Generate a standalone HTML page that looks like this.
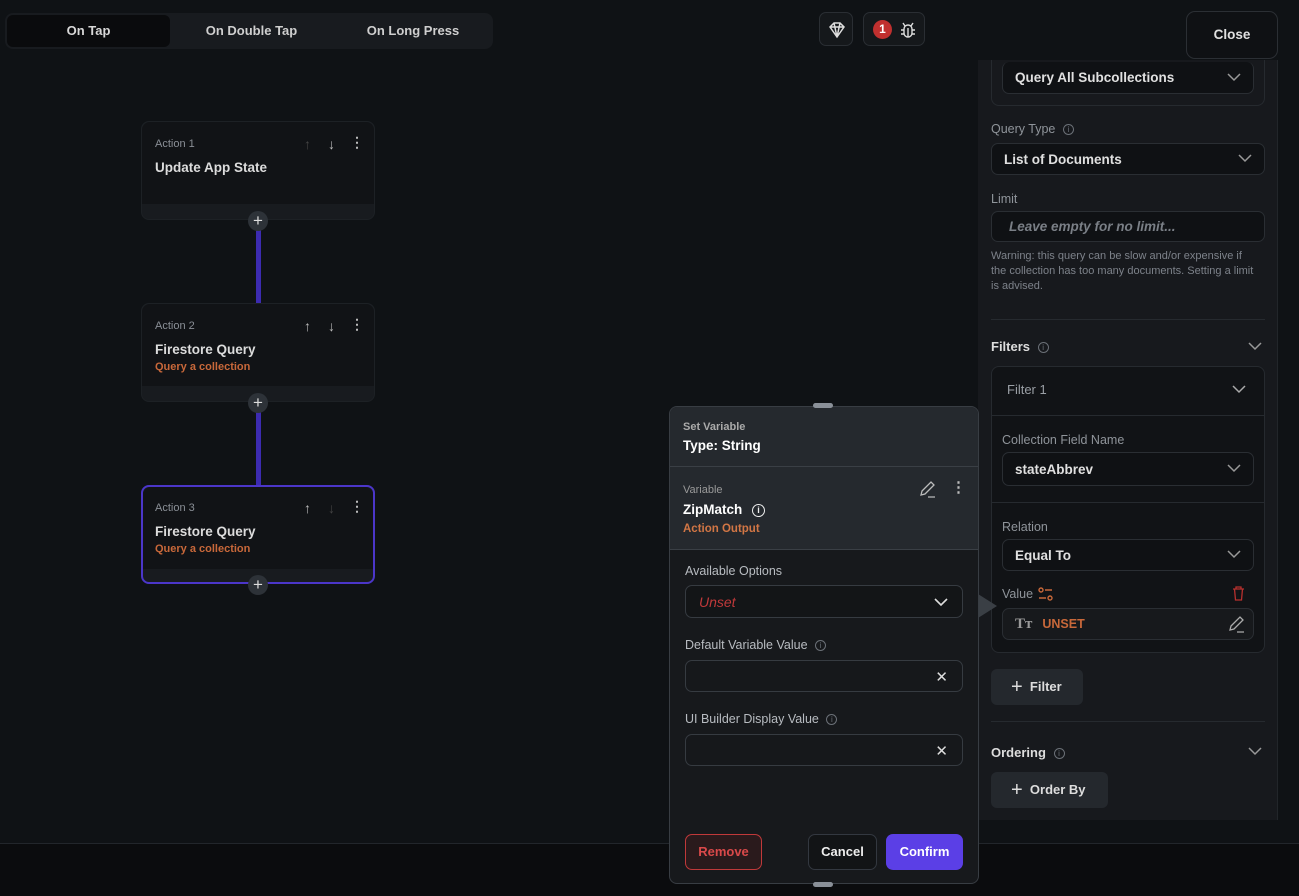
<!DOCTYPE html><html><head><meta charset="utf-8"><style>
*{box-sizing:border-box;margin:0;padding:0}
body{width:1299px;height:896px;background:#0f1215;font-family:"Liberation Sans",sans-serif;color:#e6e6e6;position:relative;overflow:hidden}
.a{position:absolute}
.b{font-weight:bold}
.card{position:absolute;left:141px;width:234px;background:#181b1f;border:1px solid #1d2125;border-radius:8px}
.card .in{position:absolute;left:0;top:0;right:0;height:82px;background:#111316;border-radius:8px 8px 0 0}
.lbl{font-size:11px;color:#8a8f96}
.ttl{font-size:13.5px;font-weight:bold;color:#dcdcdc}
.org{font-size:11px;font-weight:bold;color:#c8683a}
.plus{position:absolute;width:20px;height:20px;border-radius:50%;background:#2d3238;color:#ddd;font-size:17px;line-height:19px;text-align:center;left:248px}
.line{position:absolute;left:256px;width:5px;background:#3c2bb0}
.sel{position:absolute;border:1px solid #2a2e33;background:#0f1114;border-radius:7px;font-size:13.5px;font-weight:bold;color:#e0e0e0;padding-left:12px;display:flex;align-items:center}
.chev{position:absolute;right:12px;top:50%;margin-top:-5px}
.rl{position:absolute;font-size:12.5px;color:#8f949a}
.inp{position:absolute;left:685px;width:278px;height:32px;border:1px solid #363b41;border-radius:7px;background:#16181b}
.x{position:absolute;right:14px;top:7px;color:#ddd;font-size:15px}
.ic{display:inline-block;width:11px;height:11px;border:1px solid #6b7077;border-radius:50%;font-size:8px;line-height:9px;text-align:center;color:#6b7077;vertical-align:middle;margin-left:4px}
</style></head><body>
<div class="a" style="left:5px;top:13px;width:488px;height:36px;background:#181b1f;border-radius:8px"></div>
<div class="a b" style="left:7px;top:15px;width:163px;height:32px;background:#0a0b0d;border-radius:6px;font-size:13px;color:#d8d8d8;text-align:center;line-height:32px">On Tap</div>
<div class="a b" style="left:170px;top:15px;width:163px;height:32px;font-size:13px;color:#cfcfcf;text-align:center;line-height:32px">On Double Tap</div>
<div class="a b" style="left:333px;top:15px;width:160px;height:32px;font-size:13px;color:#cfcfcf;text-align:center;line-height:32px">On Long Press</div>
<div class="a" style="left:819px;top:12px;width:34px;height:34px;border:1px solid #2a2e33;border-radius:7px;background:#15181b">
<svg class="a" style="left:8px;top:8px" width="18" height="18" viewBox="0 0 18 18" fill="none" stroke="#ddd" stroke-width="1.5"><path d="M2 6l4-4h6l4 4-7 10z M6 2l3 14 M12 2 9 16 M2 6h14"/></svg></div>
<div class="a" style="left:863px;top:12px;width:62px;height:34px;border:1px solid #2a2e33;border-radius:7px;background:#15181b">
<div class="a b" style="left:9px;top:7px;width:19px;height:19px;border-radius:50%;background:#c0302f;color:#fff;font-size:12px;text-align:center;line-height:19px">1</div>
<svg class="a" style="left:34px;top:7px" width="20" height="20" viewBox="0 0 20 20" fill="none" stroke="#ddd" stroke-width="1.4"><rect x="6" y="5" width="8" height="12" rx="4"/><path d="M10 8v9M6 10H3M14 10h3M6 14H3M14 14h3M7 6 5 3M13 6l2-3"/></svg></div>
<div class="a b" style="left:1186px;top:11px;width:92px;height:48px;border:1px solid #2b2f34;border-radius:9px;background:#0f1114;font-size:13.5px;color:#e0e0e0;text-align:center;line-height:46px">Close</div>

<div class="line" style="top:228px;height:76px"></div>
<div class="line" style="top:410px;height:76px"></div>
<div class="card" style="top:121px;height:99px"><div class="in"></div>
<div class="a lbl" style="left:13px;top:16px">Action 1</div>
<div class="a ttl" style="left:13px;top:38px">Update App State</div>
<div class="a" style="left:162px;top:14px;font-size:14px;color:#444">↑</div>
<div class="a" style="left:186px;top:14px;font-size:14px;color:#bbb">↓</div>
<div class="a b" style="left:208px;top:12px;font-size:14px;color:#bbb">⋮</div></div>
<div class="plus" style="top:211px">+</div>
<div class="card" style="top:303px;height:99px"><div class="in"></div>
<div class="a lbl" style="left:13px;top:16px">Action 2</div>
<div class="a ttl" style="left:13px;top:38px">Firestore Query</div>
<div class="a org" style="left:13px;top:57px">Query a collection</div>
<div class="a" style="left:162px;top:14px;font-size:14px;color:#bbb">↑</div>
<div class="a" style="left:186px;top:14px;font-size:14px;color:#bbb">↓</div>
<div class="a b" style="left:208px;top:12px;font-size:14px;color:#bbb">⋮</div></div>
<div class="plus" style="top:393px">+</div>
<div class="card" style="top:485px;height:99px;border:2px solid #4b36c9"><div class="in"></div>
<div class="a lbl" style="left:12px;top:15px">Action 3</div>
<div class="a ttl" style="left:12px;top:37px">Firestore Query</div>
<div class="a org" style="left:12px;top:56px">Query a collection</div>
<div class="a" style="left:161px;top:13px;font-size:14px;color:#bbb">↑</div>
<div class="a" style="left:185px;top:13px;font-size:14px;color:#444">↓</div>
<div class="a b" style="left:207px;top:11px;font-size:14px;color:#bbb">⋮</div></div>
<div class="plus" style="top:575px">+</div>

<div class="a" style="left:0;top:843px;width:1299px;height:53px;background:#0b0c0e;border-top:1px solid #22262b"></div>

<div class="a" style="left:978px;top:60px;width:300px;height:760px;background:#17191d;border-right:1px solid #22262a"></div>
<div class="a" style="left:991px;top:60px;width:274px;height:46px;border:1px solid #262a2f;border-top:none;border-radius:0 0 8px 8px"></div>
<div class="sel" style="left:1002px;top:62px;width:252px;height:32px;border-top:none">Query All Subcollections<svg class="chev" width="14" height="9" viewBox="0 0 14 9" fill="none" stroke="#999" stroke-width="1.5"><path d="M1 1l6 6 6-6"/></svg></div>
<div class="rl" style="left:991px;top:122px">Query Type <span class="ic">i</span></div>
<div class="sel" style="left:991px;top:143px;width:274px;height:32px">List of Documents<svg class="chev" width="14" height="9" viewBox="0 0 14 9" fill="none" stroke="#999" stroke-width="1.5"><path d="M1 1l6 6 6-6"/></svg></div>
<div class="rl" style="left:991px;top:192px">Limit</div>
<div class="sel" style="left:991px;top:211px;width:274px;height:31px;padding-left:17px;color:#7a7f86;font-style:italic">Leave empty for no limit...</div>
<div class="a" style="left:991px;top:249px;width:266px;font-size:11px;line-height:15px;color:#7d828a">Warning: this query can be slow and/or expensive if the collection has too many documents. Setting a limit is advised.</div>
<div class="a" style="left:991px;top:319px;width:274px;height:1px;background:#262a2f"></div>
<div class="a b" style="left:991px;top:339px;font-size:13px;color:#ddd">Filters <span class="ic" style="font-weight:normal">i</span></div>
<svg class="a" style="left:1248px;top:342px" width="14" height="9" viewBox="0 0 14 9" fill="none" stroke="#999" stroke-width="1.5"><path d="M1 1l6 6 6-6"/></svg>
<div class="a" style="left:991px;top:366px;width:274px;height:287px;border:1px solid #262a2f;border-radius:8px;background:#111316"></div>
<div class="a" style="left:1007px;top:382px;font-size:13px;color:#9a9fa5">Filter 1</div>
<svg class="a" style="left:1232px;top:385px" width="14" height="9" viewBox="0 0 14 9" fill="none" stroke="#aaa" stroke-width="1.5"><path d="M1 1l6 6 6-6"/></svg>
<div class="a" style="left:992px;top:415px;width:272px;height:1px;background:#262a2f"></div>
<div class="rl" style="left:1002px;top:433px">Collection Field Name</div>
<div class="sel" style="left:1002px;top:452px;width:252px;height:34px">stateAbbrev<svg class="chev" width="14" height="9" viewBox="0 0 14 9" fill="none" stroke="#999" stroke-width="1.5"><path d="M1 1l6 6 6-6"/></svg></div>
<div class="a" style="left:992px;top:502px;width:272px;height:1px;background:#262a2f"></div>
<div class="rl" style="left:1002px;top:520px">Relation</div>
<div class="sel" style="left:1002px;top:539px;width:252px;height:32px">Equal To<svg class="chev" width="14" height="9" viewBox="0 0 14 9" fill="none" stroke="#999" stroke-width="1.5"><path d="M1 1l6 6 6-6"/></svg></div>
<div class="rl" style="left:1002px;top:587px">Value</div>
<svg class="a" style="left:1038px;top:587px" width="15" height="14" viewBox="0 0 15 14" fill="none" stroke="#c8683a" stroke-width="1.4"><circle cx="3" cy="3" r="2"/><path d="M7 3h7M1 11h7"/><circle cx="12" cy="11" r="2"/></svg>
<svg class="a" style="left:1232px;top:586px" width="13" height="15" viewBox="0 0 13 15" fill="none" stroke="#b8302e" stroke-width="1.3"><path d="M1 3h11M4 3V1h5v2M2.5 3l1 11h6l1-11"/></svg>
<div class="sel" style="left:1002px;top:608px;width:252px;height:32px;background:#17191c"><span style="color:#999;font-size:15px;font-family:'Liberation Serif',serif">Tт</span><span style="color:#c8683a;margin-left:10px;font-size:12.5px">UNSET</span>
<svg class="a" style="right:8px;top:7px" width="18" height="17" viewBox="0 0 18 17" fill="none" stroke="#aaa" stroke-width="1.3"><path d="M3 14l1-4 9-9 3 3-9 9zM10 16h7"/></svg></div>
<div class="a b" style="left:991px;top:669px;width:92px;height:36px;background:#24282d;border-radius:6px;font-size:13px;color:#ddd;line-height:36px;padding-left:20px"><span style="font-size:20px;font-weight:normal;vertical-align:-2px">+</span>&nbsp; Filter</div>
<div class="a" style="left:991px;top:721px;width:274px;height:1px;background:#262a2f"></div>
<div class="a b" style="left:991px;top:745px;font-size:13px;color:#ddd">Ordering <span class="ic" style="font-weight:normal">i</span></div>
<svg class="a" style="left:1248px;top:747px" width="14" height="9" viewBox="0 0 14 9" fill="none" stroke="#999" stroke-width="1.5"><path d="M1 1l6 6 6-6"/></svg>
<div class="a b" style="left:991px;top:772px;width:117px;height:36px;background:#24282d;border-radius:6px;font-size:13px;color:#ddd;line-height:36px;padding-left:20px"><span style="font-size:20px;font-weight:normal;vertical-align:-2px">+</span>&nbsp; Order By</div>

<div class="a" style="left:978px;top:594px;width:0;height:0;border-top:12px solid transparent;border-bottom:12px solid transparent;border-left:19px solid #3a3f45"></div>
<div class="a" style="left:669px;top:406px;width:310px;height:478px;background:#17191c;border:1px solid #383d43;border-radius:8px;overflow:hidden">
<div class="a" style="left:0;top:0;width:310px;height:142px;background:#25292e"></div>
<div class="a" style="left:0;top:59px;width:310px;height:1px;background:#3a3f45"></div>
<div class="a" style="left:0;top:142px;width:310px;height:1px;background:#3a3f45"></div>
<div class="a b" style="left:13px;top:14px;font-size:11px;color:#aaa">Set Variable</div>
<div class="a b" style="left:13px;top:31px;font-size:13.5px;color:#fff">Type: String</div>
<div class="a" style="left:13px;top:77px;font-size:11px;color:#999">Variable</div>
<div class="a b" style="left:13px;top:95px;font-size:13.5px;color:#fff">ZipMatch <span class="ic" style="border-color:#eee;color:#eee;width:13px;height:13px;line-height:11px;font-size:9px;margin-left:6px">i</span></div>
<div class="a b" style="left:13px;top:116px;font-size:11.5px;color:#d27645">Action Output</div>
<svg class="a" style="left:248px;top:74px" width="18" height="17" viewBox="0 0 18 17" fill="none" stroke="#bbb" stroke-width="1.3"><path d="M3 14l1-4 9-9 3 3-9 9zM10 16h7"/></svg>
<div class="a b" style="left:281px;top:71px;font-size:15px;color:#bbb">⋮</div>
<div class="a" style="left:15px;top:157px;font-size:12.5px;color:#b8bcc1">Available Options</div>
<div class="a" style="left:15px;top:178px;width:278px;height:33px;border:1px solid #363b41;border-radius:7px;background:#131517;font-size:14px;font-style:italic;color:#c0393a;padding:8px 0 0 13px">Unset
<svg class="a" style="right:14px;top:12px" width="14" height="9" viewBox="0 0 14 9" fill="none" stroke="#ddd" stroke-width="1.6"><path d="M1 1l6 6 6-6"/></svg></div>
<div class="a" style="left:15px;top:231px;font-size:12.5px;color:#b8bcc1">Default Variable Value <span class="ic">i</span></div>
<div class="a" style="left:15px;top:305px;font-size:12.5px;color:#b8bcc1">UI Builder Display Value <span class="ic">i</span></div>
<div class="a b" style="left:15px;top:427px;width:77px;height:36px;border:1px solid #c0393a;border-radius:7px;background:#2a1a1c;color:#d9494a;font-size:13px;text-align:center;line-height:34px">Remove</div>
<div class="a b" style="left:138px;top:427px;width:69px;height:36px;border:1px solid #333840;border-radius:7px;background:#121416;color:#eee;font-size:13px;text-align:center;line-height:34px">Cancel</div>
<div class="a b" style="left:216px;top:427px;width:77px;height:36px;border-radius:7px;background:#5b3fe6;color:#fff;font-size:13px;text-align:center;line-height:36px">Confirm</div>
</div>
<div class="inp" style="top:660px"><span class="x">✕</span></div>
<div class="inp" style="top:734px"><span class="x">✕</span></div>
<div class="a" style="left:813px;top:403px;width:20px;height:5px;border-radius:3px;background:#8a9098"></div>
<div class="a" style="left:813px;top:882px;width:20px;height:5px;border-radius:3px;background:#8a9098"></div>
</body></html>
